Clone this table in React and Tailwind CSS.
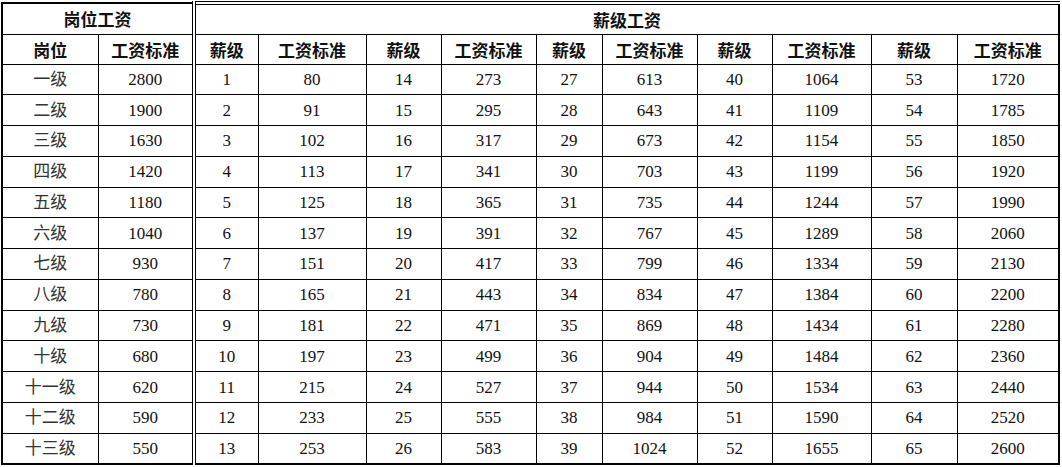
import React from "react";

const posts = ["一级","二级","三级","四级","五级","六级","七级","八级","九级","十级","十一级","十二级","十三级"];
const postPay = [2800,1900,1630,1420,1180,1040,930,780,730,680,620,590,550];
const groups = [
  [80,91,102,113,125,137,151,165,181,197,215,233,253],
  [273,295,317,341,365,391,417,443,471,499,527,555,583],
  [613,643,673,703,735,767,799,834,869,904,944,984,1024],
  [1064,1109,1154,1199,1244,1289,1334,1384,1434,1484,1534,1590,1655],
  [1720,1785,1850,1920,1990,2060,2130,2200,2280,2360,2440,2520,2600],
];
const widths = [96, 96, 64, 108, 75, 95, 66, 95, 75, 99, 86, 102];

export default function App() {
  return (
    <div className="w-[1062px] h-[467px] bg-white pl-[1px] pt-[1px] overflow-hidden">
      <table className="table-fixed border-collapse w-[1059px] text-[#111] text-[17px] font-['Liberation_Serif','Noto_Sans_CJK_SC',serif]">
        <colgroup>
          {widths.map((w, i) => (
            <col key={i} style={{ width: w }} />
          ))}
        </colgroup>
        <thead>
          <tr className="h-[31px]">
            <th colSpan={2} className="border border-double border-black border-t-2 border-l-2 border-r-4 font-bold font-['Noto_Sans_CJK_SC',sans-serif] text-[17px] leading-none p-0 text-center">岗位工资</th>
            <th colSpan={10} className="border border-double border-black border-t-4 border-r-2 font-bold font-['Noto_Sans_CJK_SC',sans-serif] text-[17px] leading-none p-0 text-center">薪级工资</th>
          </tr>
          <tr className="h-[30px]">
            <th className="border border-black border-l-2 font-bold font-['Noto_Sans_CJK_SC',sans-serif] leading-none p-0">岗位</th>
            <th className="border border-double border-black border-r-4 font-bold font-['Noto_Sans_CJK_SC',sans-serif] leading-none p-0">工资标准</th>
            {[0,1,2,3,4].map((g) => (
              <React.Fragment key={g}>
                <th className="border border-black font-bold font-['Noto_Sans_CJK_SC',sans-serif] leading-none p-0">薪级</th>
                <th className={`border border-black font-bold font-['Noto_Sans_CJK_SC',sans-serif] leading-none p-0 ${g === 4 ? "border-r-2" : ""}`}>工资标准</th>
              </React.Fragment>
            ))}
          </tr>
        </thead>
        <tbody>
          {posts.map((p, r) => {
            const last = r === posts.length - 1;
            return (
              <tr key={r} className="h-[30.77px]">
                <td className={`border border-black border-l-2 text-center p-0 leading-none text-[#333] ${last ? "border-b-2" : ""}`}>{p}</td>
                <td className={`border border-double border-black border-r-4 text-center p-0 leading-none ${last ? "border-b-2" : ""}`}>{postPay[r]}</td>
                {groups.map((vals, g) => (
                  <React.Fragment key={g}>
                    <td className={`border border-black text-center p-0 leading-none ${last ? "border-b-2" : ""}`}>{g * 13 + r + 1}</td>
                    <td className={`border border-black text-center p-0 leading-none ${g === 4 ? "border-r-2" : ""} ${last ? "border-b-2" : ""}`}>{vals[r]}</td>
                  </React.Fragment>
                ))}
              </tr>
            );
          })}
        </tbody>
      </table>
    </div>
  );
}
